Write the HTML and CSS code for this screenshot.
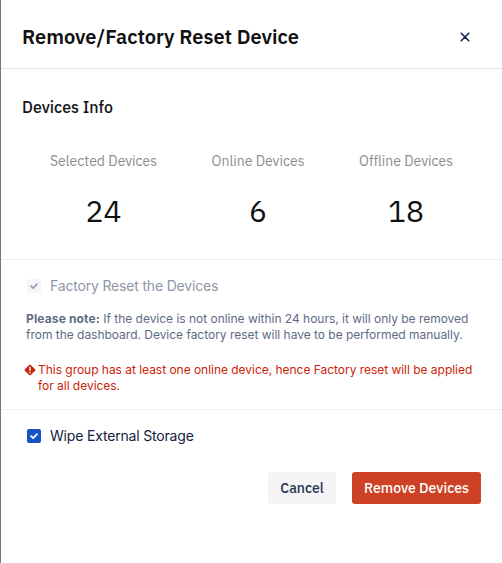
FILE: index.html
```html
<!DOCTYPE html>
<html lang="en">
<head>
<meta charset="utf-8">
<title>Remove/Factory Reset Device</title>
<link rel="stylesheet" href="styles.css">
</head>
<body>
<main class="dialog">
  <header class="header">
    <h1 class="title">Remove/Factory Reset Device</h1>
    <button class="close" aria-label="Close"><svg width="10" height="10" viewBox="0 0 10 10"><path d="M1.2 1.2 8.8 8.8M8.8 1.2 1.2 8.8" fill="none" stroke="#172653" stroke-width="1.6" stroke-linecap="round"/></svg></button>
  </header>
  <section class="info">
    <h2 class="subtitle">Devices Info</h2>
    <div class="stats">
      <div class="stat"><span class="label">Selected Devices</span><span class="number">24</span></div>
      <div class="stat"><span class="label">Online Devices</span><span class="number">6</span></div>
      <div class="stat"><span class="label">Offline Devices</span><span class="number">18</span></div>
    </div>
  </section>
  <section class="reset">
    <div class="option disabled">
      <span class="box"><svg width="14" height="14" viewBox="0 0 14 14"><path d="M4.1 7.2 6.1 9.1 10 5.1" fill="none" stroke="#97a0b3" stroke-width="1.8" stroke-linecap="round" stroke-linejoin="round"/></svg></span>
      <span>Factory Reset the Devices</span>
    </div>
    <p class="note"><b>Please note:</b> If the device is not online within 24 hours, it will only be removed<br>from the dashboard. Device factory reset will have to be performed manually.</p>
    <div class="warning">
      <svg class="alert" width="12" height="12" viewBox="0 0 12 12"><path d="M5.2.9Q6 .1 6.8.9L11.1 5.2Q11.9 6 11.1 6.8L6.8 11.1Q6 11.9 5.2 11.1L.9 6.8Q.1 6 .9 5.2Z" fill="#c4250b"/><path d="M6 3.1V6.5" stroke="#fff" stroke-width="1.4" stroke-linecap="round"/><circle cx="6" cy="8.7" r=".8" fill="#fff"/></svg>
      <p class="warning-text">This group has at least one online device, hence Factory reset will be applied<br>for all devices.</p>
    </div>
  </section>
  <section class="wipe">
    <div class="option">
      <span class="box checked"><svg width="14" height="14" viewBox="0 0 14 14"><path d="M4.1 7.2 6.1 9.1 10 5.1" fill="none" stroke="#fff" stroke-width="1.8" stroke-linecap="round" stroke-linejoin="round"/></svg></span>
      <span>Wipe External Storage</span>
    </div>
  </section>
  <footer class="footer">
    <button class="button cancel">Cancel</button>
    <button class="button remove">Remove Devices</button>
  </footer>
</main>
</body>
</html>
```
FILE: styles.css
```css
* { box-sizing: border-box; }
body { margin: 0; background: #fff; }
h1, h2, p { margin: 0; }
button { border: 0; padding: 0; background: none; }
.dialog {
  height: 563px;
  overflow: hidden;
  border-left: 1px solid #77777b;
  font-family: "IBM Plex Sans", Roboto, sans-serif;
  white-space: nowrap;
}
.header {
  height: 69px;
  padding: 6px 32px 0 21px;
  display: flex;
  align-items: center;
  justify-content: space-between;
  border-bottom: 1px solid #e1e2e8;
}
.title { font-size: 20px; line-height: 26px; font-weight: 600; color: #111; }
.close { width: 10px; height: 10px; }
.close svg { display: block; }
.info { height: 191px; padding-top: 28px; border-bottom: 1px solid #f0f0f0; }
.subtitle { margin-left: 21px; font-size: 16px; line-height: 20px; font-weight: 500; color: #151515; }
.stats { display: grid; grid-template-columns: 161px 148px 148px; margin: 34px 0 0 22px; }
.stat { display: flex; flex-direction: column; align-items: center; }
.label { font-size: 14px; line-height: 20px; color: #8d8d8d; }
.number { margin-top: 21px; font-size: 30px; line-height: 38px; color: #111; }
.reset { height: 150px; padding-top: 16px; border-bottom: 1px solid #f0f0f0; font-family: Inter, sans-serif; }
.option { display: flex; align-items: center; height: 20px; margin-left: 26px; gap: 9px; font-family: Inter, sans-serif; font-size: 14px; line-height: 18px; letter-spacing: -.18px; color: #142044; }
.disabled { color: #8e96a7; }
.box { width: 14px; height: 14px; border-radius: 2px; background: #f4f5f7; }
.box svg { display: block; }
.checked { background: #1552c4; }
.note { margin: 15px 0 0 25px; font-size: 12px; line-height: 16px; letter-spacing: -.02px; color: #5e6b85; }
.note b { letter-spacing: .14px; }
.warning { display: flex; margin: 19px 0 0 23px; gap: 2px; color: #cb2307; }
.alert { margin-top: 2px; }
.warning-text { font-size: 12px; line-height: 16px; letter-spacing: -.03px; }
.wipe { padding-top: 16px; }
.footer { display: flex; justify-content: flex-end; gap: 16px; margin: 26px 21px 0 0; }
.button { height: 32px; border-radius: 3px; font-family: inherit; font-size: 14px; font-weight: 500; }
.cancel { width: 68px; background: #f5f5f6; color: #243457; }
.remove { width: 129px; background: #cd4224; color: #fff; }
```
